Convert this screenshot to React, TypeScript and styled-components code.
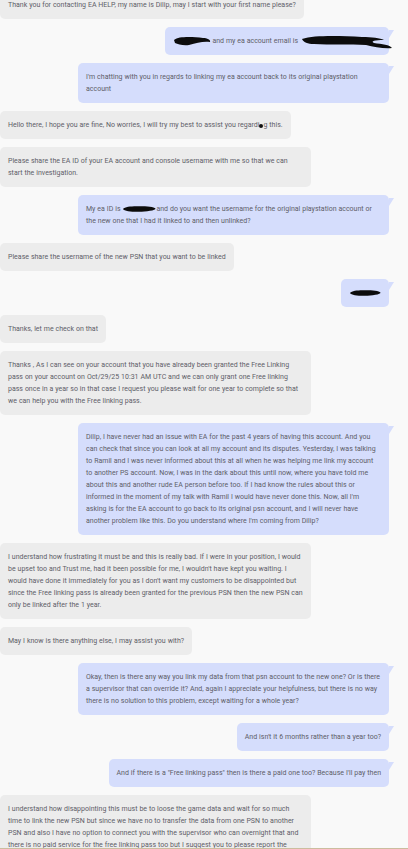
import React from 'react';
import styled, { createGlobalStyle } from 'styled-components';

const GlobalStyle = createGlobalStyle`
  html, body {
    margin: 0;
    padding: 0;
    background: #f9f9f9;
  }
`;

const Screen = styled.div`
  height: 849px;
  box-sizing: border-box;
  overflow: hidden;
  border-bottom: 1px solid #cbbd9f;
  background: #f9f9f9;
  font-family: Roboto, 'Liberation Sans', sans-serif;
  font-size: 7px;
  word-spacing: 0.18px;
  line-height: 12px;
  color: #5e5e68;
`;

const Thread = styled.div`
  display: flex;
  flex-direction: column;
  gap: 8px;
  margin-top: -9px;
  padding-right: 19px;
`;

const Bubble = styled.div<{ $mine?: boolean }>`
  position: relative;
  align-self: ${(p) => (p.$mine ? 'flex-end' : 'flex-start')};
  max-width: 311px;
  box-sizing: border-box;
  padding: 8px;
  border-radius: 5px;
  background: ${(p) => (p.$mine ? '#d5ddfc' : '#ececec')};

  ${(p) =>
    p.$mine &&
    `
    &::after {
      content: '';
      position: absolute;
      top: 3px;
      right: -5px;
      width: 0;
      height: 0;
      border-top: 8px solid #d5ddfc;
      border-right: 5px solid transparent;
    }
  `}
`;

const Scribble = styled.svg`
  display: inline-block;
  vertical-align: middle;
  overflow: visible;
`;

const Dot = styled.span`
  display: inline-block;
  width: 4px;
  height: 4px;
  margin: 0 0 -1px 0;
  border-radius: 50%;
  background: #111;
`;

const Blob: React.FC<{ w: number }> = ({ w }) => (
  <Scribble width={w} height={8} viewBox={`0 0 ${w} 8`}>
    <path
      d={`M1 4 C3 1.5, ${w * 0.3} 1, ${w / 2} 1.2 C${w * 0.75} 1.2, ${w - 2} 1.8, ${w - 0.5} 3.6 C${w} 5.6, ${
        w * 0.7
      } 6.8, ${w / 2} 6.8 C${w * 0.3} 6.9, 2 6.4, 1 4 Z`}
      fill="#0c0c0c"
    />
  </Scribble>
);

const NameScribble = () => (
  <Scribble width={39} height={12} viewBox="0 0 39 12">
    <path
      d="M1 5 C6 1, 20 2, 30 3 C34 3, 38 5, 37 7 C30 6, 24 8, 16 10 C10 11, 5 9, 2 8 Z"
      fill="#0c0c0c"
    />
  </Scribble>
);

const EmailScribble = () => (
  <Scribble width={81} height={12} viewBox="0 0 81 12">
    <path
      d="M2 4 C15 0, 40 1, 62 2 C72 2, 80 3, 84 5 C75 5, 70 6, 74 8 C82 9, 90 10, 92 13 C85 14, 74 12, 66 10 C50 9, 30 10, 14 9 C8 9, 3 7, 2 4 Z"
      fill="#0c0c0c"
    />
  </Scribble>
);

const App: React.FC = () => {
  return (
    <Screen>
      <GlobalStyle />
      <Thread>
        <Bubble>Thank you for contacting EA HELP, my name is Dilip, may I start with your first name please?</Bubble>
        <Bubble $mine>
          <NameScribble />and my ea account email is <EmailScribble />
        </Bubble>
        <Bubble $mine>
          I'm chatting with you in regards to linking my ea account back to its original playstation account
        </Bubble>
        <Bubble>
          Hello there, I hope you are fine, No worries, I will try my best to assist you regardi<Dot />g this.
        </Bubble>
        <Bubble>
          Please share the EA ID of your EA account and console username with me so that we can start the
          investigation.
        </Bubble>
        <Bubble $mine>
          My ea ID is <Blob w={34} />and do you want the username for the original playstation account or the new
          one that I had it linked to and then unlinked?
        </Bubble>
        <Bubble>Please share the username of the new PSN that you want to be linked</Bubble>
        <Bubble $mine>
          <Blob w={32} />
        </Bubble>
        <Bubble>Thanks, let me check on that</Bubble>
        <Bubble>
          Thanks , As I can see on your account that you have already been granted the Free Linking pass on your
          account on Oct/29/25 10:31 AM UTC and we can only grant one Free linking pass once in a year so in that
          case I request you please wait for one year to complete so that we can help you with the Free linking pass.
        </Bubble>
        <Bubble $mine>
          Dilip, I have never had an issue with EA for the past 4 years of having this account. And you can check
          that since you can look at all my account and its disputes. Yesterday, I was talking to Ramil and I was
          never informed about this at all when he was helping me link my account to another PS account. Now, I was
          in the dark about this until now, where you have told me about this and another rude EA person before too.
          If I had know the rules about this or informed in the moment of my talk with Ramil I would have never done
          this. Now, all I'm asking is for the EA account to go back to its original psn account, and I will never
          have another problem like this. Do you understand where I'm coming from Dilip?
        </Bubble>
        <Bubble>
          I understand how frustrating it must be and this is really bad. If I were in your position, I would be
          upset too and Trust me, had it been possible for me, I wouldn't have kept you waiting. I would have done it
          immediately for you as I don't want my customers to be disappointed but since the Free linking pass is
          already been granted for the previous PSN then the new PSN can only be linked after the 1 year.
        </Bubble>
        <Bubble>May I know is there anything else, I may assist you with?</Bubble>
        <Bubble $mine>
          Okay, then is there any way you link my data from that psn account to the new one? Or is there a supervisor
          that can override it? And, again I appreciate your helpfulness, but there is no way there is no solution to
          this problem, except waiting for a whole year?
        </Bubble>
        <Bubble $mine>And isn't it 6 months rather than a year too?</Bubble>
        <Bubble $mine>And if there is a "Free linking pass" then is there a paid one too? Because I'll pay then</Bubble>
        <Bubble>
          I understand how disappointing this must be to loose the game data and wait for so much time to link the
          new PSN but since we have no to transfer the data from one PSN to another PSN and also I have no option to
          connect you with the supervisor who can overnight that and there is no paid service for the free linking
          pass too but I suggest you to please report the issue to PlayStation support as well.
        </Bubble>
      </Thread>
    </Screen>
  );
};

export default App;
